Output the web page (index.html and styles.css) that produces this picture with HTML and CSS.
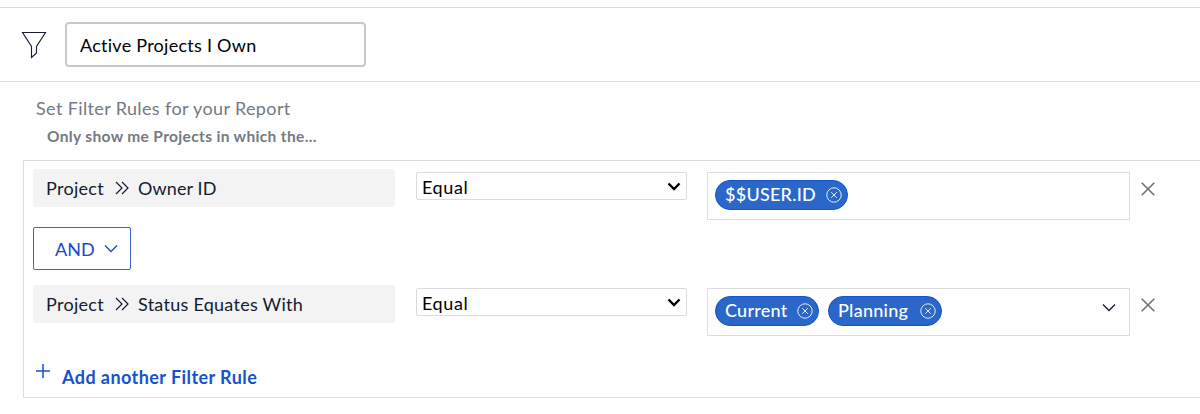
FILE: index.html
```html
<!DOCTYPE html>
<html lang="en">
<head>
<meta charset="utf-8">
<title>Active Projects I Own</title>
<link rel="stylesheet" href="styles.css">
</head>
<body>
<svg class="defs" width="0" height="0">
  <symbol id="remove" viewBox="0 0 16 16"><circle cx="8" cy="8" r="7.2"/><path d="M5.2 5.2l5.6 5.6M10.8 5.2l-5.6 5.6"/></symbol>
  <symbol id="chevrons" viewBox="0 0 14 14"><path d="M1 1l6 6-6 6M7 1l6 6-6 6"/></symbol>
  <symbol id="close" viewBox="0 0 14 14"><path d="M.7.7l12.6 12.6M13.3.7L.7 13.3"/></symbol>
  <symbol id="arrow" viewBox="0 0 14 10"><path d="M1.5 1.5L7 7l5.5-5.500"/></symbol>
  <symbol id="chevron" viewBox="0 0 14 10"><path d="M1 1.5l6 6 6-6"/></symbol>
</svg>
<header class="header">
  <svg class="funnel" viewBox="0 0 26 28"><path d="M1.500 1.500H24.500L15.500 15.500v6.500L10.500 26.500V15.500z"/></svg>
  <div class="title-field"><span class="title-text">Active Projects I Own</span></div>
</header>
<main class="main">
  <h1 class="heading"><span>Set Filter Rules for your Report</span></h1>
  <p class="subheading"><span>Only show me Projects in which the...</span></p>
  <section class="rules">
    <div class="rule">
      <div class="field"><span class="object">Project</span><svg class="chevrons"><use href="#chevrons"/></svg><span class="owner">Owner ID</span></div>
      <div class="select"><span>Equal</span><svg class="arrow"><use href="#arrow"/></svg></div>
      <div class="values">
        <div class="chip chip-user"><span>$$USER.ID</span><svg class="remove"><use href="#remove"/></svg></div>
      </div>
      <svg class="close"><use href="#close"/></svg>
    </div>
    <div class="joiner"><span>AND</span><svg class="chevron"><use href="#chevron"/></svg></div>
    <div class="rule">
      <div class="field"><span class="object">Project</span><svg class="chevrons"><use href="#chevrons"/></svg><span class="status">Status Equates With</span></div>
      <div class="select"><span>Equal</span><svg class="arrow"><use href="#arrow"/></svg></div>
      <div class="values">
        <div class="chip chip-current"><span>Current</span><svg class="remove"><use href="#remove"/></svg></div>
        <div class="chip chip-planning"><span>Planning</span><svg class="remove"><use href="#remove"/></svg></div>
        <svg class="chevron expand"><use href="#chevron"/></svg>
      </div>
      <svg class="close"><use href="#close"/></svg>
    </div>
    <div class="add"><svg class="plus" viewBox="0 0 14 14"><path d="M7 0v14M0 7h14"/></svg><span class="add-text">Add another Filter Rule</span></div>
  </section>
</main>
</body>
</html>
```
FILE: styles.css
```css
* { box-sizing: border-box; }
body {
  margin: 0;
  height: 414px;
  overflow: hidden;
  background: #fff;
  color: #151b30;
  font: 18px/24px Lato, "Open Sans", sans-serif;
  white-space: nowrap;
}
svg { display: block; flex: none; fill: none; stroke: currentColor; }
.defs { position: absolute; }
.header {
  display: flex;
  align-items: flex-start;
  height: 75px;
  margin-top: 7px;
  padding: 15px 0 0 21px;
  border-top: 1px solid #dedede;
  border-bottom: 1px solid #dedede;
}
.funnel { width: 26px; height: 28px; margin: 8px 18px 0 0; stroke-width: 1.1; }
.title-field {
  width: 301px;
  height: 45px;
  margin-top: -1px;
  padding: 9px 13px;
  border: 2px solid #c8c9ce;
  border-radius: 4px;
  color: #000;
}
.title-text { letter-spacing: .26px; }
.main { padding-left: 23px; }
.heading { margin: 14px 0 0 13px; color: #747983; font-size: 18px; font-weight: 400; line-height: 24px; letter-spacing: .37px; }
.subheading { margin: 6px 0 0 24px; color: #747983; font-size: 15.5px; font-weight: 700; line-height: 20px; letter-spacing: .35px; }
.rules {
  width: 1190px;
  height: 238px;
  margin-top: 14px;
  padding: 8px 0 0 9px;
  border: 1px solid #dedede;
}
.rule { display: flex; align-items: flex-start; height: 58px; }
.field {
  display: flex;
  align-items: center;
  width: 362px;
  height: 38px;
  padding-left: 13px;
  border-radius: 3px;
  background: #f3f3f3;
}
.object { width: 69px; letter-spacing: .3px; }
.owner { letter-spacing: .12px; }
.status { letter-spacing: .27px; }
.chevrons { width: 14px; height: 14px; margin-right: 9px; stroke-width: 1.2; }
.select {
  display: flex;
  align-items: center;
  justify-content: space-between;
  width: 271px;
  height: 28px;
  margin: 3px 0 0 21px;
  padding: 2px 5px 0 5px;
  border: 1px solid #dcdcdc;
  border-radius: 2px;
  color: #000;
  letter-spacing: .6px;
}
.arrow { width: 14px; height: 10px; margin-top: -1px; stroke-width: 2.4; }
.values {
  display: flex;
  align-items: flex-start;
  gap: 9px;
  width: 423px;
  height: 48px;
  margin: 3px 0 0 20px;
  padding: 7px 13px 0 7px;
  border: 1px solid #dedede;
}
.chip {
  display: flex;
  align-items: center;
  justify-content: space-between;
  height: 30px;
  padding: 0 5px 2px 9px;
  border: 1px solid #1454cc;
  border-radius: 15px;
  background: #2a67c9;
  color: #fff;
  font-weight: 500;
  letter-spacing: .25px;
}
.chip-user { width: 133px; }
.chip-current { width: 104px; }
.chip-planning { width: 114px; }
.remove { width: 16px; height: 16px; margin-top: 2px; stroke: #e3eafa; }
.expand { margin: 7px 0 0 auto; }
.close { width: 14px; height: 14px; margin: 13px 0 0 11px; color: #6c717b; stroke-width: 1.6; }
.joiner {
  display: flex;
  align-items: center;
  gap: 9px;
  width: 98px;
  height: 43px;
  margin-bottom: 15px;
  padding-left: 21px;
  border: 1px solid #3c64d3;
  border-radius: 2px;
  color: #1747cb;
}
.chevron { width: 14px; height: 10px; stroke-width: 1.3; }
.add { display: flex; gap: 12px; margin: 21px 0 0 3px; color: #1552ce; font-weight: 700; }
.plus { width: 14px; height: 14px; stroke-width: 1.5; }
.add-text { padding-top: 1px; letter-spacing: .43px; }
```
